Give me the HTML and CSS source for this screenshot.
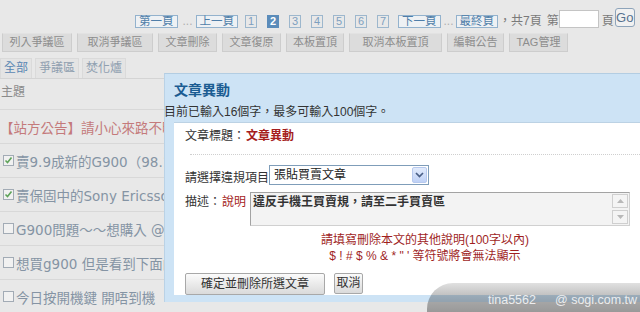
FILE: index.html
```html
<!DOCTYPE html>
<html lang="zh-Hant">
<head>
<meta charset="utf-8">
<title>文章異動</title>
<link rel="stylesheet" href="styles.css">
</head>
<body>
<div class="page">
  <div class="pager">
    <span class="pg-word">第一頁</span>
    <span class="dots">...</span>
    <span class="pg-word prev">上一頁</span>
    <span class="pg-num first-num">1</span>
    <span class="pg-num current">2</span>
    <span class="pg-num">3</span>
    <span class="pg-num">4</span>
    <span class="pg-num">5</span>
    <span class="pg-num">6</span>
    <span class="pg-num">7</span>
    <span class="pg-word next">下一頁</span>
    <span class="dots dots-tight">...</span>
    <span class="pg-word last">最終頁</span>
    <span class="total">，共7頁</span>
    <span class="goto">第</span>
    <span class="page-input"></span>
    <span class="goto goto-after">頁</span>
    <span class="go">Go</span>
  </div>

  <div class="toolbar">
    <span class="tb-btn">列入爭議區</span>
    <span class="tb-btn">取消爭議區</span>
    <span class="tb-btn">文章刪除</span>
    <span class="tb-btn">文章復原</span>
    <span class="tb-btn">本板置頂</span>
    <span class="tb-btn">取消本板置頂</span>
    <span class="tb-btn">編輯公告</span>
    <span class="tb-btn">TAG管理</span>
  </div>

  <div class="tabs">
    <span class="tab active">全部</span>
    <span class="tab">爭議區</span>
    <span class="tab">焚化爐</span>
  </div>

  <div class="list">
    <div class="list-head">主題</div>
    <div class="row notice">【站方公告】請小心來路不明的交易訊息</div>
    <div class="row"><span class="cb checked"><svg width="9" height="9" viewBox="0 0 9 9"><path d="M1.5 4.5l2 2 4-5" fill="none" stroke="#5fa35a" stroke-width="1.6"/></svg></span>賣9.9成新的G900（98.12購入）</div>
    <div class="row"><span class="cb checked"><svg width="9" height="9" viewBox="0 0 9 9"><path d="M1.5 4.5l2 2 4-5" fill="none" stroke="#5fa35a" stroke-width="1.6"/></svg></span>賣保固中的Sony Ericsson G900</div>
    <div class="row"><span class="cb"></span>G900問題～～想購入 @@</div>
    <div class="row"><span class="cb"></span>想買g900 但是看到下面的文章</div>
    <div class="row"><span class="cb"></span>今日按開機鍵 開唔到機</div>
  </div>
</div>

<div class="dialog">
  <div class="dlg-title">文章異動</div>
  <div class="dlg-info">目前已輸入16個字，最多可輸入100個字。</div>
  <div class="dlg-body">
    <div class="field-title"><span>文章標題：</span><span class="red strong">文章異動</span></div>
    <div class="dotted"></div>
    <div class="field-row">
      <span class="field-label">請選擇違規項目</span>
      <div class="select">
        <span class="select-text">張貼買賣文章</span>
        <span class="select-arrow"><svg width="9" height="6" viewBox="0 0 9 6"><path d="M1 1l3.5 3.5L8 1" fill="none" stroke="#4a5f86" stroke-width="1.7"/></svg></span>
      </div>
    </div>
    <div class="field-row desc-row">
      <div class="desc-label"><span>描述：</span><span class="red">說明</span></div>
      <div class="textarea">
        <span class="ta-text">違反手機王買賣規，請至二手買賣區</span>
        <div class="scroll">
          <span class="sb-btn"><svg width="7" height="4" viewBox="0 0 7 4"><path d="M0 4L3.5 0L7 4z" fill="#b8b8b8"/></svg></span>
          <span class="sb-btn"><svg width="7" height="4" viewBox="0 0 7 4"><path d="M0 0L3.5 4L7 0z" fill="#b8b8b8"/></svg></span>
        </div>
      </div>
    </div>
    <div class="notes">
      <div>請填寫刪除本文的其他說明(100字以內)</div>
      <div>$ ! # $ % &amp; * " ' 等符號將會無法顯示</div>
    </div>
    <div class="actions">
      <span class="btn btn-main">確定並刪除所選文章</span>
      <span class="btn btn-cancel">取消</span>
    </div>
  </div>
</div>

<div class="watermark">
  <span>tina5562</span>
  <span>@ sogi.com.tw</span>
</div>
</body>
</html>
```

FILE: styles.css
```css
* { box-sizing: border-box; }

html, body {
  margin: 0;
  padding: 0;
  width: 640px;
  height: 312px;
  overflow: hidden;
}

body {
  position: relative;
  background: #e8e8e8;
  font-family: "Liberation Sans", "Noto Sans CJK TC", sans-serif;
  font-size: 12px;
  color: #333;
}

.page {
  height: 312px;
  overflow: hidden;
}

/* ---------- pager ---------- */
.pager {
  display: flex;
  align-items: flex-end;
  height: 28px;
  padding-left: 135px;
  color: #8a8a8a;
  white-space: nowrap;
}

.pg-word {
  height: 13px;
  padding: 0 3px;
  border: 1px solid #93b2cd;
  background: #eef1f4;
  color: #4f7ea9;
  font-size: 11.5px;
  line-height: 11px;
}

.pg-word.prev { margin-left: 3px; }
.pg-word.next { margin-left: 9px; }
.pg-word.last { margin-left: 2px; }

.dots {
  margin-left: 5px;
  line-height: 14px;
  color: #b0b0b0;
}
.dots.dots-tight { margin-left: 3px; }

.pg-num {
  width: 12px;
  height: 13px;
  margin-left: 10px;
  border: 1px solid #9db7cd;
  color: #7d9fbf;
  font-size: 11px;
  line-height: 11px;
  text-align: center;
}
.pg-num.first-num { margin-left: 7px; }
.pg-num.current {
  background: #5b8cba;
  border-color: #5b8cba;
  color: #fff;
  font-weight: bold;
}

.total {
  margin-left: 1px;
  line-height: 14px;
  color: #7a7a7a;
}

.goto {
  margin-left: 5px;
  line-height: 14px;
  color: #7a7a7a;
}
.goto.goto-after { margin-left: 3px; }

.page-input {
  width: 40px;
  height: 18px;
  background: #fff;
  border: 1px solid #c4c4c4;
}

.go {
  width: 20px;
  height: 19px;
  margin-left: 1px;
  margin-bottom: 1px;
  border: 1px solid #8ea4ba;
  border-radius: 3px;
  background: #f1f1f1;
  color: #56728f;
  font-size: 13px;
  line-height: 17px;
  text-align: center;
}

/* ---------- toolbar ---------- */
.toolbar {
  display: grid;
  grid-template-columns: 70px 76px 59px 59px 58px 93px 57px 59px;
  column-gap: 5px;
  margin-top: 5px;
  padding-left: 2px;
}

.tb-btn {
  height: 19px;
  border: 1px solid #cdcdcd;
  border-top-color: #e2e2e2;
  background: #dcdcdc;
  color: #8d8d8d;
  font-size: 11px;
  line-height: 17px;
  text-align: center;
}

/* ---------- tabs ---------- */
.tabs {
  display: flex;
  gap: 3px;
  margin-top: 6px;
  height: 20px;
}

.tab {
  height: 20px;
  padding: 0 3px;
  border: 1px solid #dadada;
  border-bottom: none;
  background: #e4e4e4;
  color: #90a0b0;
  font-size: 12px;
  line-height: 18px;
}
.tab.active { color: #5b87b3; }

/* ---------- list (its right part lies under the dialog) ---------- */
.list {
  width: 164px;
  overflow: hidden;
}

.list-head {
  height: 31px;
  border-top: 1px solid #d4d4d4;
  padding: 5px 0 0 1px;
  color: #8b8b8b;
  font-size: 12px;
  line-height: 16px;
}

.row {
  display: flex;
  align-items: center;
  height: 34px;
  border-top: 1px solid #d8d8d8;
  padding-left: 3px;
  color: #8594a4;
  font-family: "DejaVu Sans", "Noto Sans CJK TC", sans-serif;
  font-size: 13.5px;
  white-space: nowrap;
  overflow: hidden;
}

.row.notice {
  padding-left: 0;
  color: #c47a7b;
}

.cb {
  display: flex;
  flex: none;
  align-items: center;
  justify-content: center;
  width: 11px;
  height: 11px;
  margin-right: 2px;
  border: 1px solid #a2abb5;
  background: #f1f1f1;
}

/* ---------- dialog ---------- */
.dialog {
  position: absolute;
  left: 164px;
  top: 73px;
  width: 476px;
  height: 229px;
  background: #cde3f5;
  border-top: 1px solid #b3cde2;
  border-left: 1px solid #bad2e6;
}

.dlg-title {
  padding: 8px 0 0 9px;
  color: #1b5c92;
  font-size: 14px;
  font-weight: bold;
  line-height: 16px;
}

.dlg-info {
  margin-top: 6px;
  margin-left: -1px;
  color: #333;
  font-size: 12px;
  line-height: 16px;
  white-space: nowrap;
}

.dlg-body {
  margin: 2px 0 0 9px;
  height: 173px;
  background: #fff;
  border-top: 1px solid #bcd2e4;
  padding-left: 11px;
}

.red { color: #a51d1d; margin-left: 1px; }
.strong { font-weight: bold; }

.field-title {
  display: flex;
  padding-top: 5px;
  line-height: 16px;
}

.dotted {
  margin: 10px 0 0 5px;
  border-top: 1px dotted #cfcfcf;
}

.field-row {
  display: flex;
  margin-top: 10px;
}

.field-label {
  padding-top: 5px;
  line-height: 16px;
}

.select {
  display: flex;
  align-items: center;
  justify-content: space-between;
  width: 160px;
  height: 20px;
  border: 1px solid #7f9db9;
  background: #fff;
  padding: 0 1px 0 4px;
}

.select-text {
  color: #222;
  line-height: 16px;
}

.select-arrow {
  display: flex;
  align-items: center;
  justify-content: center;
  width: 15px;
  height: 16px;
  border: 1px solid #b7c9ee;
  border-radius: 2px;
  background: linear-gradient(#e2ebfc, #bfd1f6);
}

.desc-row { margin-top: 6px; }

.desc-label {
  display: flex;
  width: 65px;
  padding-top: 2px;
  line-height: 16px;
}

.textarea {
  display: flex;
  justify-content: space-between;
  width: 380px;
  height: 34px;
  border: 1px solid #a3a3a3;
  border-right-color: #d0d0d0;
  border-bottom-color: #d0d0d0;
  background: #f3f3f3;
  padding: 1px 1px 1px 2px;
}

.ta-text {
  color: #333;
  font-weight: bold;
  line-height: 16px;
}

.scroll {
  display: flex;
  flex-direction: column;
  justify-content: space-between;
}

.sb-btn {
  display: flex;
  align-items: center;
  justify-content: center;
  width: 16px;
  height: 14px;
  border: 1px solid #cfcfcf;
  background: #f4f4f4;
}

.notes {
  width: 210px;
  margin: 6px 0 0 135px;
  color: #a01f1f;
  line-height: 16px;
  text-align: center;
  white-space: nowrap;
}

.actions {
  display: flex;
  gap: 9px;
  margin-top: 9px;
}

.btn {
  height: 22px;
  border: 1px solid #a8a8a8;
  border-radius: 2px;
  background: linear-gradient(#fbfbfb, #dadada);
  color: #333;
  line-height: 20px;
  text-align: center;
}
.btn-main { width: 140px; }
.btn-cancel { width: 29px; height: 21px; line-height: 19px; }

/* ---------- watermark ---------- */
.watermark {
  position: absolute;
  left: 427px;
  top: 283px;
  width: 213px;
  height: 29px;
  border-top-left-radius: 26px;
  background: linear-gradient(rgba(0, 0, 0, 0.12), rgba(0, 0, 0, 0.26) 14px, rgba(0, 0, 0, 0.34));
  display: flex;
  gap: 19px;
  padding: 9px 0 0 61px;
  color: rgba(255, 255, 255, 0.82);
  font-family: "Liberation Sans", sans-serif;
  font-size: 12.5px;
  line-height: 16px;
  white-space: nowrap;
  overflow: hidden;
}
```
